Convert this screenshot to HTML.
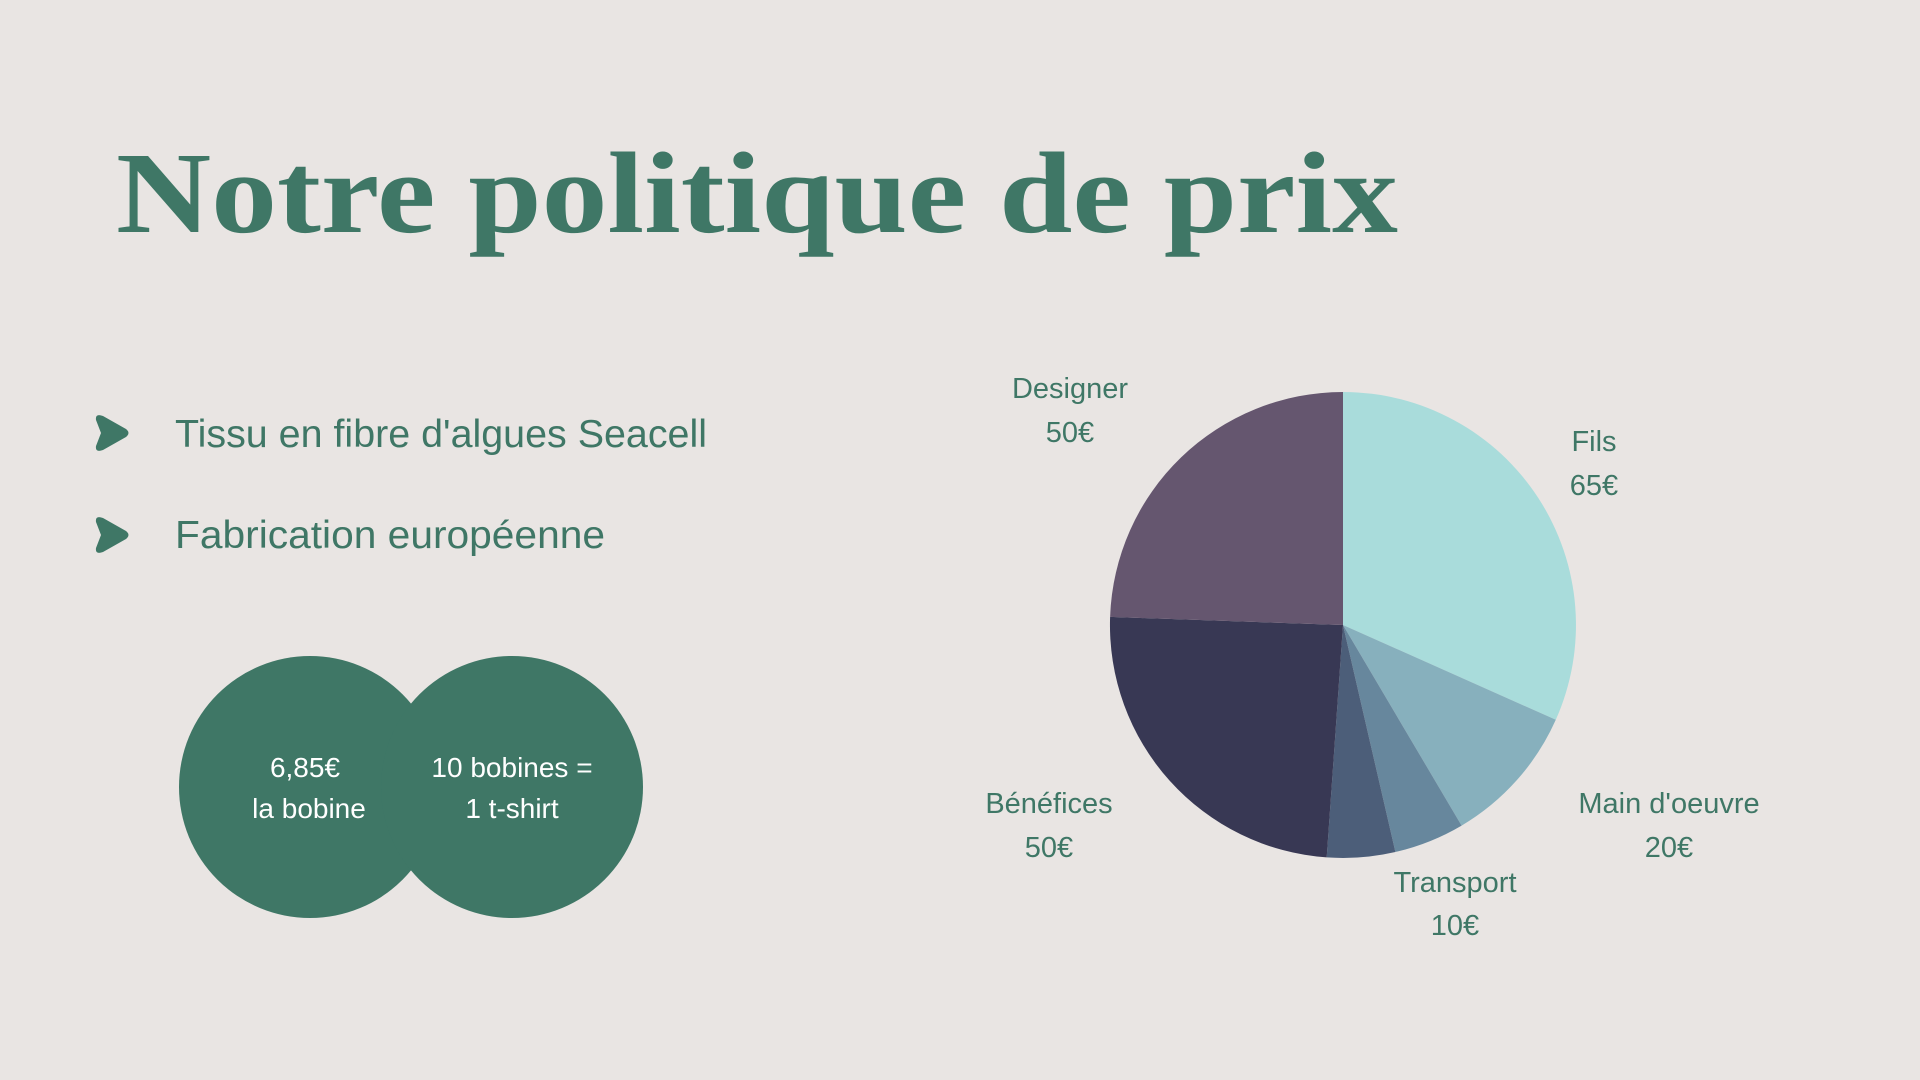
<!DOCTYPE html>
<html><head><meta charset="utf-8"><style>
html,body{margin:0;padding:0;background:#e9e5e3;}
svg{display:block}
</style></head><body>
<svg width="1920" height="1080" viewBox="0 0 1920 1080" xmlns="http://www.w3.org/2000/svg">
<rect width="1920" height="1080" fill="#e9e5e3"/>
<text x="116" y="232" font-family="'Liberation Serif',serif" font-weight="bold" font-size="116" fill="#3f7766" textLength="1282" lengthAdjust="spacingAndGlyphs">Notre politique de prix</text>

<g fill="#3f7766">
<path d="M96,420 Q95,413 103,416 L126,429 Q131,433 126,437 L103,450 Q95,453 96,446 L101,433 Z"/>
<path d="M96,522 Q95,515 103,518 L126,531 Q131,535 126,539 L103,552 Q95,555 96,548 L101,535 Z"/>
</g>
<g font-family="'Liberation Sans',sans-serif" font-size="39" fill="#3f7766">
<text x="175" y="447" textLength="532" lengthAdjust="spacingAndGlyphs">Tissu en fibre d'algues Seacell</text>
<text x="175" y="548" textLength="430" lengthAdjust="spacingAndGlyphs">Fabrication européenne</text>
</g>

<g fill="#3f7766">
<circle cx="310" cy="787" r="131"/>
<circle cx="512" cy="787" r="131"/>
</g>
<g font-family="'Liberation Sans',sans-serif" font-size="28" fill="#ffffff" text-anchor="middle">
<text x="305" y="777">6,85€</text>
<text x="309" y="818">la bobine</text>
<text x="512" y="777">10 bobines =</text>
<text x="512" y="818">1 t-shirt</text>
</g>

<g>
<path d="M1343,625 L1343,392 A233,233 0 0 1 1555.8,719.8 Z" fill="#a9dcdb"/>
<path d="M1343,625 L1555.8,719.8 A233,233 0 0 1 1461.6,825.6 Z" fill="#87b0bd"/>
<path d="M1343,625 L1461.6,825.6 A233,233 0 0 1 1395.4,852 Z" fill="#67879d"/>
<path d="M1343,625 L1395.4,852 A233,233 0 0 1 1326.7,857.4 Z" fill="#4c5e79"/>
<path d="M1343,625 L1326.7,857.4 A233,233 0 0 1 1110.1,616.9 Z" fill="#383854"/>
<path d="M1343,625 L1110.1,616.9 A233,233 0 0 1 1343,392 Z" fill="#65566f"/>
</g>
<g font-family="'Liberation Sans',sans-serif" font-size="29" fill="#3f7766" text-anchor="middle">
<text x="1070" y="398">Designer</text>
<text x="1070" y="442">50€</text>
<text x="1594" y="451">Fils</text>
<text x="1594" y="495">65€</text>
<text x="1669" y="813">Main d'oeuvre</text>
<text x="1669" y="857">20€</text>
<text x="1455" y="892">Transport</text>
<text x="1455" y="935">10€</text>
<text x="1049" y="813">Bénéfices</text>
<text x="1049" y="857">50€</text>
</g>
</svg>
</body></html>
